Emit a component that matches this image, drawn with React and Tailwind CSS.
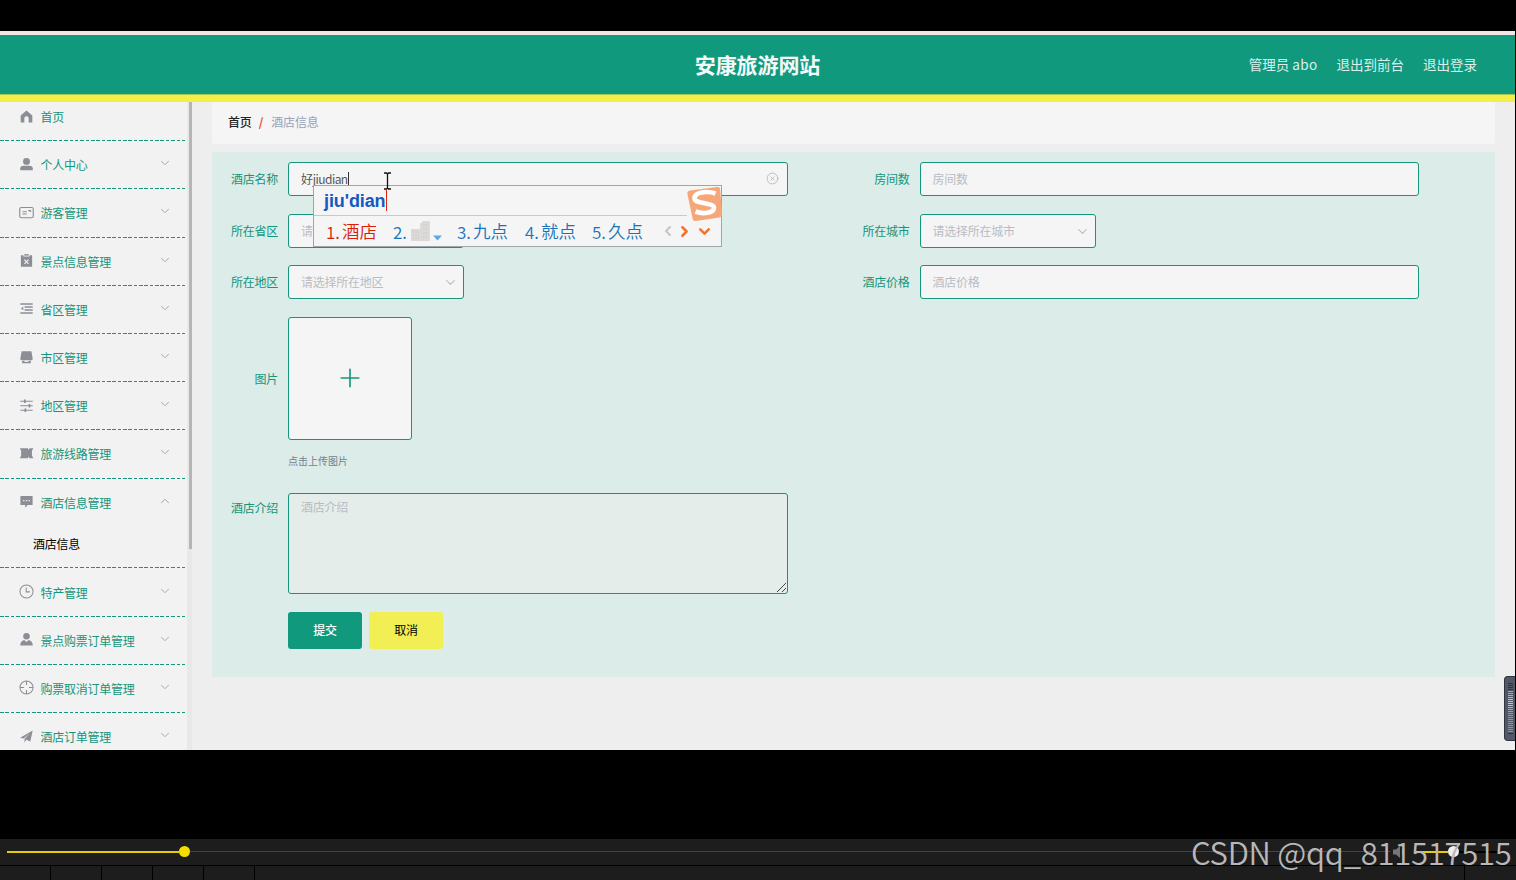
import { ChevronDown, ChevronUp, ChevronLeft, ChevronRight, Plus, CircleX } from 'lucide-react';

const icons = {
  home: <path d="M8 1.6 1.8 6.9v7.5h3.9V9.9a2.3 2.3 0 0 1 4.6 0v4.5h3.9V6.9z" fill="currentColor" />,
  user: (
    <g fill="currentColor">
      <ellipse cx="8" cy="4.7" rx="3.7" ry="3.6" />
      <path d="M1.3 14.2v-2c0-1.8 1.4-2.9 3.2-2.9h7c1.8 0 3.2 1.1 3.2 2.9v2z" />
    </g>
  ),
  postcard: (
    <g fill="none" stroke="currentColor">
      <rect x="0.8" y="2.6" width="14.4" height="11" rx="1.6" strokeWidth="1.2" />
      <path d="M3.8 7.3h4.4M3.8 9.6h4.4" strokeWidth="1.1" />
      <path d="M10 5.9h2.2v1.6" strokeWidth="1.3" />
    </g>
  ),
  claim: (
    <g>
      <path d="M2 2.4h2.7v1.2h6.6V2.4H14v12.4H2z" fill="currentColor" />
      <path d="M5.6 1.2h4.8v1.6H5.6z" fill="currentColor" />
      <path d="m5.8 7 4.4 4.6M10.2 7l-4.4 4.6" stroke="#f2f2f2" strokeWidth="1.3" />
    </g>
  ),
  fold: (
    <g stroke="currentColor" strokeWidth="1.6" fill="none">
      <path d="M1.4 3.3h13.2M6 6.5h8.6M6 9.6h8.6M1.4 12.9h13.2" />
      <path d="M4.6 6.2v3.6L2 8z" fill="currentColor" stroke="none" />
    </g>
  ),
  shop: (
    <g fill="currentColor">
      <path d="M2.8 1.4h10.4l1.4 7.8c0 1-.8 1.7-1.8 1.7H3.2c-1 0-1.8-.7-1.8-1.7z" />
      <path d="M3.4 11.4h1.8c.5 1 1.5 1.3 2.8 1.3s2.3-.3 2.8-1.3h1.8v2.8H3.4z" />
    </g>
  ),
  operation: (
    <g stroke="currentColor" strokeWidth="1.2">
      <path d="M1.4 3.5h13.2M1.4 8.2h13.2M1.4 13h13.2" />
      <path d="M6.2 1.7v3.6M11.2 6.4v3.6M6.8 11.2v3.6" strokeWidth="1.8" />
    </g>
  ),
  film: (
    <path
      d="M.8 2.5h8.6l.9 1.8.9-1.8h4.2l-1.6 2.6v5.2l1.6 2.7h-4.2l-.9-1.9-.9 1.9H.8l1.5-2.7V5.1z"
      fill="currentColor"
    />
  ),
  comment: (
    <g>
      <path d="M1.5 2.2h13v9.6H9.3l-2.7 2.8v-2.8H1.5z" fill="currentColor" />
      <path d="M4.4 7h1.4M7.3 7h1.4M10.2 7h1.4" stroke="#f2f2f2" strokeWidth="1.4" />
    </g>
  ),
  time: (
    <g fill="none" stroke="currentColor" strokeWidth="1.1">
      <circle cx="8" cy="8" r="7" />
      <path d="M7.7 3.8v4.6h3.9" />
    </g>
  ),
  custom: (
    <g fill="currentColor">
      <circle cx="8" cy="4.6" r="3.5" />
      <path d="M1.3 14.5c0-3 1.6-5.3 4.2-5.9l2.5 2 2.5-2c2.6.6 4.2 2.9 4.2 5.9z" />
    </g>
  ),
  aim: (
    <g fill="none" stroke="currentColor" strokeWidth="1.1">
      <circle cx="8" cy="8" r="7" />
      <path d="M8 1v4.4M8 10.6V15M1 8h4.4M10.6 8H15" />
    </g>
  ),
  promotion: <path d="M1.3 9.4 14.6 1.7l-2.6 12-4-2.4-2.1 3v-4l5.6-5.6-6.8 5.3z" fill="currentColor" />,
};

const menus = [
  { icon: 'home', title: '首页', leaf: true },
  { icon: 'user', title: '个人中心' },
  { icon: 'postcard', title: '游客管理' },
  { icon: 'claim', title: '景点信息管理' },
  { icon: 'fold', title: '省区管理' },
  { icon: 'shop', title: '市区管理' },
  { icon: 'operation', title: '地区管理' },
  { icon: 'film', title: '旅游线路管理' },
  { icon: 'comment', title: '酒店信息管理', children: ['酒店信息'] },
  { icon: 'time', title: '特产管理' },
  { icon: 'custom', title: '景点购票订单管理' },
  { icon: 'aim', title: '购票取消订单管理' },
  { icon: 'promotion', title: '酒店订单管理' },
];

function MenuItem({ item }) {
  const Arrow = item.children ? ChevronUp : ChevronDown;
  return (
    <li className="shrink-0">
      <div className="flex h-[47.2px] items-center pl-[19px] pr-[15px]">
        <svg viewBox="0 0 16 16" className="mb-px h-[15px] w-[15px] shrink-0 text-[#8b8e94]">
          {icons[item.icon]}
        </svg>
        <span className="ml-[6.5px] flex-1 whitespace-nowrap pt-px text-[12px] leading-none tracking-[-0.25px] text-[#15957b]">
          {item.title}
        </span>
        {!item.leaf && <Arrow className="mb-[3px] h-[14px] w-[14px] text-[#a5a7aa]" strokeWidth={1.7} />}
      </div>
      {item.children?.map((child) => (
        <div
          key={child}
          className="flex h-[41.8px] items-center pb-[5px] pl-[33px] text-[12px] leading-none tracking-[-0.25px] text-black"
        >
          {child}
        </div>
      ))}
      <div className="h-px bg-[repeating-linear-gradient(90deg,#15957b_0_3.6px,transparent_3.6px_5.35px)]" />
    </li>
  );
}

function Label({ children }) {
  return (
    <label className="w-[66px] shrink-0 whitespace-nowrap text-right text-[12px] leading-none tracking-[-0.25px] text-[#15957b]">
      {children}
    </label>
  );
}

function Field({ label, children }) {
  return (
    <div className="flex h-[34px] w-[631.5px] items-center gap-[10px]">
      <Label>{label}</Label>
      {children}
    </div>
  );
}

function Input({ placeholder, children }) {
  return (
    <div className="flex h-[34px] w-[499.5px] items-center justify-between rounded-[3px] border border-[#15957b] bg-[#f5f5f5] px-3 pb-px text-[12px] leading-none tracking-[-0.25px]">
      {children || <span className="text-[#b9bcc4]">{placeholder}</span>}
    </div>
  );
}

function Select({ placeholder }) {
  return (
    <div className="flex h-[34px] w-[176px] items-center justify-between rounded-[3px] border border-[#15957b] bg-[#f5f5f5] pl-3 pr-[5px] text-[12px] leading-none tracking-[-0.25px] text-[#b9bcc4]">
      <span>{placeholder}</span>
      <ChevronDown className="h-[15px] w-[15px]" strokeWidth={1.7} />
    </div>
  );
}

const candidates = [
  { text: '酒店', cls: 'w-[67px] text-[#d81e06]' },
  { text: '', cls: 'w-[64px] text-[#1874b8]' },
  { text: '九点', cls: 'w-[68px] text-[#1874b8]' },
  { text: '就点', cls: 'w-[67px] text-[#1874b8]' },
  { text: '久点', cls: 'w-[69px] text-[#1874b8]' },
];

function ImePanel() {
  return (
    <div className="absolute left-[313px] top-[185px] flex h-[62px] w-[409px] flex-col border border-[#9ea6ac] bg-[#f5f5f5]">
      <div className="mr-[34px] flex h-[30px] items-center border-b border-[#c9c9c9] pl-[10px]">
        <span className="font-['Liberation_Sans',sans-serif] text-[18px] font-bold leading-none tracking-[-0.1px] text-[#1259c3]">
          jiu'dian
        </span>
        <span className="ml-px h-[21px] w-px bg-[#e02010]" />
      </div>
      <div className="flex flex-1 items-center pl-[12px]">
        {candidates.map((c, i) => (
          <div key={i} className={`flex shrink-0 items-center whitespace-nowrap text-[17.5px] font-[350] leading-none ${c.cls}`}>
            <span className="w-[16px] text-[17px] tracking-[-0.2px]">{i + 1}.</span>
            {c.text || (
              <svg viewBox="0 0 32 21" className="ml-[2px] h-[21px] w-[32px]">
                <path d="M0 8h9V2h2V0h8v20H0z" fill="#dcdad8" />
                <path d="M2 11h6M2 14h6M2 17h6M12 4h5M12 8h5M12 12h5M12 16h5" stroke="#c9c8c7" strokeDasharray="1.5 1" />
                <path d="M22 14.5h9l-4.5 5z" fill="#62a8e4" />
              </svg>
            )}
          </div>
        ))}
        <ChevronLeft className="-ml-px h-[16px] w-[16px] text-[#c4c4c4]" strokeWidth={3} />
        <ChevronRight className="h-[17px] w-[17px] text-[#ee7430]" strokeWidth={3.6} />
        <ChevronDown className="ml-[3px] h-[17px] w-[17px] text-[#ee7430]" strokeWidth={3.6} />
      </div>
      <svg viewBox="0 0 36 36" className="absolute -right-px top-0 h-[36px] w-[36px]">
        <path d="M4 4.5 31 1c2-.2 3 .4 3.2 2.4L36 28c0 2-.8 3-2.8 3.4L10 35c-2 .2-3-.4-3.4-2.4L1.4 8C1 6 2 4.8 4 4.5z" fill="#f6a779" />
        <path d="M29.5 7.5C21 4.5 8 6 8.5 12.5c.5 6 20 3.5 19.5 9.5-.5 5-11 6.5-18.500 3.500" fill="none" stroke="#fff" strokeWidth="4.6" />
      </svg>
    </div>
  );
}

function TextCursor() {
  return (
    <svg viewBox="0 0 9 18" className="absolute left-[383px] top-[172px] h-[18px] w-[9px]">
      <path d="M1 1h2.5l1 1 1-1H8M1 17h2.5l1-1 1 1H8M4.5 2v14" fill="none" stroke="#111" strokeWidth="1.3" />
    </svg>
  );
}

const meterBars = [
  'bg-[#2e323c]', 'bg-[#2e323c]', 'bg-[#2e323c]', 'bg-[#2e323c]',
  'bg-[#e2925f]', 'bg-[#e2925f]', 'bg-[#e2a45f]', 'bg-[#e0b45c]', 'bg-[#dcc95a]', 'bg-[#dcc95a]', 'bg-[#dcd25a]',
  'bg-[#c8cf5a]', 'bg-[#b0c45a]', 'bg-[#9abc5a]', 'bg-[#86b45c]', 'bg-[#76b464]', 'bg-[#66b474]',
  'bg-[#56b686]', 'bg-[#4ab898]', 'bg-[#40baa6]', 'bg-[#36bdb4]', 'bg-[#36bdb4]', 'bg-[#36bdb4]',
  'bg-[#36bdb4]', 'bg-[#36bdb4]', 'bg-[#2e323c]',
];

function AudioMeter() {
  return (
    <div className="absolute left-[1504px] top-[676px] flex h-[65px] w-[11px] flex-col gap-px rounded-l-[4px] border border-r-0 border-[#30343e] bg-[#535867] pl-[3px] pt-[6px]">
      {meterBars.map((color, i) => (
        <div key={i} className={`h-px w-[5px] shrink-0 ${color}`} />
      ))}
    </div>
  );
}

function Player() {
  return (
    <footer className="mt-[89px] flex h-[41px] flex-col">
      <div className="flex h-[26px] items-center bg-[#1d1d1d] pb-px pl-[7px]">
        <div className="h-[2px] w-[172px] bg-[#e6cf00]" />
        <div className="h-[11px] w-[11px] rounded-full bg-[#f5dd00]" />
        <div className="h-px w-[1200px] bg-[#444]" />
        <svg viewBox="0 0 16 14" className="ml-[2px] h-[14px] w-[16px] text-[#777]">
          <path d="M1 4.5h3L8 1v12L4 9.5H1z" fill="currentColor" />
          <path d="M10.5 4v6" stroke="currentColor" />
        </svg>
        <div className="ml-[6px] h-[2px] w-[34px] bg-[#e6cf00]" />
        <div className="h-[11px] w-[11px] rounded-full bg-[#eee]" />
        <div className="h-[2px] w-[44px] bg-black" />
      </div>
      <div className="flex h-[15px] gap-px border-t border-black bg-black">
        <div className="w-[50px] bg-[#1d1d1d]" />
        <div className="w-[50px] bg-[#1d1d1d]" />
        <div className="w-[50px] bg-[#1d1d1d]" />
        <div className="w-[50px] bg-[#1d1d1d]" />
        <div className="w-[50px] bg-[#1d1d1d]" />
        <div className="flex-1 bg-[#1d1d1d]" />
        <div className="w-[51px] bg-[#1d1d1d]" />
      </div>
    </footer>
  );
}

export default function App() {
  return (
    <div className="relative flex h-[880px] w-[1516px] flex-col overflow-hidden bg-black font-['Noto_Sans_CJK_SC',sans-serif]">
      <header className="mr-px mt-[31px] grid h-[63px] shrink-0 grid-cols-3 items-center border-t-4 border-[#f2e5e6] bg-[#11997e] pr-[38px]">
        <div />
        <h1 className="-mr-[38px] pb-px text-center text-[21px] font-bold leading-none tracking-[-0.1px] text-[#f4f9f8]">
          安康旅游网站
        </h1>
        <nav className="flex justify-end gap-[19px] whitespace-nowrap text-[13.5px] leading-none text-[#dcefeb]">
          <span>
            管理员 <span className="tracking-[0.4px]">abo</span>
          </span>
          <span>退出到前台</span>
          <span>退出登录</span>
        </nav>
      </header>
      <div className="mr-px h-[8px] shrink-0 border-t border-[#a5c94f] bg-[#f4ef48]" />

      <div className="mr-px flex h-[648px] shrink-0 bg-[#eeeeee]">
        <aside className="flex w-[192px] overflow-hidden bg-[#e8e8e8]">
          <ul className="-mt-[9px] flex w-[187px] shrink-0 flex-col bg-[#f2f2f2]">
            {menus.map((item) => (
              <MenuItem key={item.title} item={item} />
            ))}
          </ul>
          <div className="ml-[2px] h-[447px] w-[3px] bg-[#b5b5b5]" />
        </aside>

        <main className="ml-5 flex w-[1283px] flex-col">
          <div className="flex h-[42px] items-center rounded-b-[3px] bg-[#f5f5f5] pb-[2px] pl-4 text-[12px] leading-none tracking-[-0.15px]">
            <span className="font-medium text-[#222]">首页</span>
            <span className="ml-[7px] mr-[8px] font-bold text-[#e8501e]">/</span>
            <span className="text-[#9aa1b8]">酒店信息</span>
          </div>

          <form className="mt-2 flex h-[525px] flex-col bg-[#dcece8] pt-[10px]">
            <div className="flex">
              <Field label="酒店名称">
                <Input>
                  <span className="flex items-center text-[#555]">
                    好<span className="tracking-[-0.55px]">jiudian</span>
                    <span className="h-[13px] w-px bg-[#333]" />
                  </span>
                  <CircleX className="-mr-[4px] mb-px h-[13px] w-[13px] text-[#b9bcc4]" strokeWidth={1.8} />
                </Input>
              </Field>
              <Field label="房间数">
                <Input placeholder="房间数" />
              </Field>
            </div>
            <div className="mt-[18px] flex">
              <Field label="所在省区">
                <Select placeholder="请" />
              </Field>
              <Field label="所在城市">
                <Select placeholder="请选择所在城市" />
              </Field>
            </div>
            <div className="mt-[17px] flex">
              <Field label="所在地区">
                <Select placeholder="请选择所在地区" />
              </Field>
              <Field label="酒店价格">
                <Input placeholder="酒店价格" />
              </Field>
            </div>
            <div className="mt-[18px] flex items-center gap-[10px]">
              <Label>图片</Label>
              <div className="flex h-[123px] w-[124px] items-center justify-center rounded-[3px] border border-[#15957b] bg-[#f5f5f5] pb-px pr-px">
                <Plus className="h-[30px] w-[30px] text-[#15957b]" strokeWidth={1.3} />
              </div>
            </div>
            <p className="ml-[76px] mt-[15px] text-[10px] leading-[12px] text-[#777e89]">点击上传图片</p>
            <div className="mt-[26px] flex gap-[10px]">
              <div className="flex items-start pt-[9px]">
                <Label>酒店介绍</Label>
              </div>
              <div className="flex h-[101px] w-[500px] justify-between rounded-[3px] border border-[#15957b] bg-[#e4edea] pl-3 text-[12px] leading-none tracking-[-0.25px] text-[#b9bcc4]">
                <span className="pt-[7px]">酒店介绍</span>
                <svg viewBox="0 0 11 11" className="h-[11px] w-[11px] self-end">
                  <path d="M1 10 10 1M6 10l4-4" stroke="#444" />
                </svg>
              </div>
            </div>
            <div className="ml-[76px] mt-[18px] flex gap-[7px] text-[12px] leading-none tracking-[-0.25px]">
              <button type="button" className="h-[37px] w-[74px] rounded-[3px] bg-[#11997e] pb-px font-medium text-white">
                提交
              </button>
              <button type="button" className="h-[37px] w-[74px] rounded-[3px] bg-[#f2ef55] pb-px text-black">
                取消
              </button>
            </div>
          </form>
        </main>
      </div>

      <Player />

      <ImePanel />
      <TextCursor />
      <AudioMeter />
      <div className="absolute left-[1191px] top-[835px] whitespace-nowrap text-[31px] font-[350] leading-[34px] tracking-[-0.25px] text-[#b8b8b8]">
        CSDN @qq_811517515
      </div>
    </div>
  );
}
